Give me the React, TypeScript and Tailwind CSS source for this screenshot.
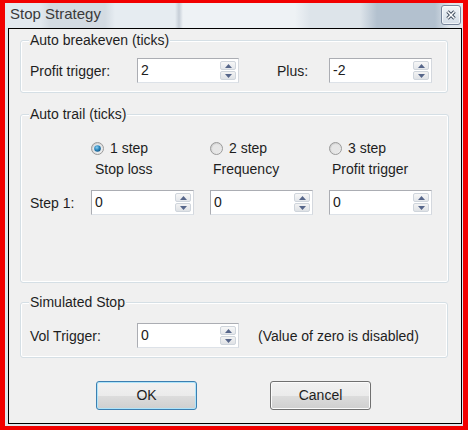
import React from 'react';

function SpinArrow({ up }: { up: boolean }) {
  return (
    <svg width="7" height="4" viewBox="0 0 7 4">
      <path d={up ? 'M0 4 L3.5 0 L7 4Z' : 'M0 0 L3.5 4 L7 0Z'} fill="#56668a" />
    </svg>
  );
}

function Spin({ value, w }: { value: string; w: string }) {
  return (
    <div
      className={`flex h-[25px] ${w} border border-[#abadb3] border-r-[#d4d8de] border-b-[#dde2e8] bg-white`}
    >
      <div className="flex-1 pl-[3px] pt-[3px] leading-[16px] text-[#202020]">{value}</div>
      <div className="my-[2px] mr-[2px] flex w-[16px] flex-col gap-[1px]">
        <div className="flex flex-1 items-center justify-center rounded-[2px] border border-[#cfd5dc] bg-[linear-gradient(#f7f7f7,#e4e7eb)]">
          <SpinArrow up />
        </div>
        <div className="flex flex-1 items-center justify-center rounded-[2px] border border-[#cfd5dc] bg-[linear-gradient(#f3f3f3,#dfe2e6)]">
          <SpinArrow up={false} />
        </div>
      </div>
    </div>
  );
}

function Radio({ on, label }: { on: boolean; label: string }) {
  return (
    <div className="flex items-center">
      <svg width="13" height="13" viewBox="0 0 13 13">
        <defs>
          <linearGradient id="radOff" x1="0" y1="0" x2="1" y2="1">
            <stop offset="0" stopColor="#c9c9c9" />
            <stop offset="1" stopColor="#f4f4f4" />
          </linearGradient>
          <radialGradient id="radDot" cx="0.4" cy="0.35" r="0.7">
            <stop offset="0" stopColor="#8fd0ef" />
            <stop offset="0.55" stopColor="#2a86bd" />
            <stop offset="1" stopColor="#15527e" />
          </radialGradient>
        </defs>
        <circle cx="6.5" cy="6.5" r="6" fill="url(#radOff)" stroke="#9a9a9a" strokeWidth="1" />
        <circle cx="6.5" cy="6.5" r="4.3" fill={on ? '#e9eef2' : '#e6e6e6'} />
        {on && <circle cx="6.5" cy="6.5" r="3.3" fill="url(#radDot)" />}
      </svg>
      <span className="ml-[6px] leading-[16px]">{label}</span>
    </div>
  );
}

function Group({ title, children, className }: { title: string; children: React.ReactNode; className: string }) {
  return (
    <fieldset
      className={`ml-[11px] mr-[13px] rounded-[3px] border border-[#d5dfe5] shadow-[inset_0_0_0_1px_#ffffff] ${className}`}
    >
      <legend className="ml-[8px] bg-[#f0f0f0] px-[1px] leading-[16px]">{title}</legend>
      {children}
    </fieldset>
  );
}

export default function App() {
  return (
    <div className="h-[430px] w-[468px] bg-[#f20000] pl-[5px] pt-[3px] font-['Liberation_Sans',Arial,sans-serif] text-[14px] text-[#1e1e1e]">
      <div className="flex h-[423px] w-[458px] flex-col bg-[#dfe6ec] pb-[2px] pl-[3px] pr-[1px]">
        {/* title bar */}
        <div className="-ml-[3px] -mr-[1px] flex h-[25px] items-start justify-between bg-[linear-gradient(90deg,#e2e9ef_0px,#e2e9ef_35px,#d3dbe2_45px,#d3dbe2_100px,#e6ecf1_110px,#e6ecf1_170px,#c6ced7_174px,#eef2f5_178px,#eef2f5_290px,#dde4ea_305px,#dde4ea_355px,#b3c1cf_372px,#b3c1cf_430px,#dfe6ec_445px)] pl-[5px] pr-[2px]">
          <span className="mt-[2px] text-[15px] leading-[18px] text-[#3a3a3a]">Stop Strategy</span>
          <div className="mt-[2px] flex h-[20px] w-[20px] items-center justify-center rounded-[3px] border border-[#76849a] bg-[linear-gradient(#f1f5f9,#d3dce6)] shadow-[inset_0_0_0_1px_#ffffffaa]">
            <svg width="10" height="10" viewBox="0 0 10 10">
              <path d="M1.5 1.5 L8.5 8.5 M8.5 1.5 L1.5 8.5" stroke="#3f4c5e" strokeWidth="3.4" />
              <path d="M1.5 1.5 L8.5 8.5 M8.5 1.5 L1.5 8.5" stroke="#ffffff" strokeWidth="1.5" />
            </svg>
          </div>
        </div>

        {/* client */}
        <div className="flex-1 border border-black bg-[#f0f0f0]">
          <Group title="Auto breakeven (ticks)" className="mt-[3px]">
            <div className="flex items-center pb-[9px] pl-[9px] pt-[10px]">
              <span className="w-[107px] leading-[16px]">Profit trigger:</span>
              <Spin value="2" w="w-[102px]" />
              <span className="ml-[38px] w-[52px] leading-[16px]">Plus:</span>
              <Spin value="-2" w="w-[103px]" />
            </div>
          </Group>

          <Group title="Auto trail (ticks)" className="mt-[13px]">
            <div className="pb-[67px] pl-[9px] pt-[18px]">
              <div className="flex">
                <div className="w-[61px]" />
                <div className="w-[119px]">
                  <Radio on label="1 step" />
                </div>
                <div className="w-[119px]">
                  <Radio on={false} label="2 step" />
                </div>
                <div className="w-[119px]">
                  <Radio on={false} label="3 step" />
                </div>
              </div>
              <div className="mt-[5px] flex leading-[16px]">
                <div className="w-[61px]" />
                <div className="w-[119px] pl-[4px]">Stop loss</div>
                <div className="w-[119px] pl-[3px]">Frequency</div>
                <div className="w-[119px] pl-[3px]">Profit trigger</div>
              </div>
              <div className="mt-[13px] flex items-center">
                <span className="w-[61px] leading-[16px]">Step 1:</span>
                <div className="w-[119px]">
                  <Spin value="0" w="w-[103px]" />
                </div>
                <div className="w-[119px]">
                  <Spin value="0" w="w-[103px]" />
                </div>
                <div className="w-[119px]">
                  <Spin value="0" w="w-[103px]" />
                </div>
              </div>
            </div>
          </Group>

          <Group title="Simulated Stop" className="mt-[11px]">
            <div className="flex items-center pb-[9px] pl-[9px] pt-[13px]">
              <span className="w-[107px] leading-[16px]">Vol Trigger:</span>
              <Spin value="0" w="w-[102px]" />
              <span className="ml-[19px] leading-[16px]">(Value of zero is disabled)</span>
            </div>
          </Group>

          <div className="mt-[23px] flex pl-[87px]">
            <button
              type="button"
              className="h-[29px] w-[101px] rounded-[3px] border border-[#3c7fb1] bg-[linear-gradient(#f2f2f2,#ebebeb_50%,#dddddd_50%,#cfcfcf)] shadow-[inset_0_0_0_1px_#aee4fa] text-[#1e1e1e]"
            >
              OK
            </button>
            <button
              type="button"
              className="ml-[73px] h-[29px] w-[101px] rounded-[3px] border border-[#707070] bg-[linear-gradient(#f2f2f2,#ebebeb_50%,#dddddd_50%,#cfcfcf)] shadow-[inset_0_0_0_1px_#fbfbfb] text-[#1e1e1e]"
            >
              Cancel
            </button>
          </div>
        </div>
      </div>
    </div>
  );
}
